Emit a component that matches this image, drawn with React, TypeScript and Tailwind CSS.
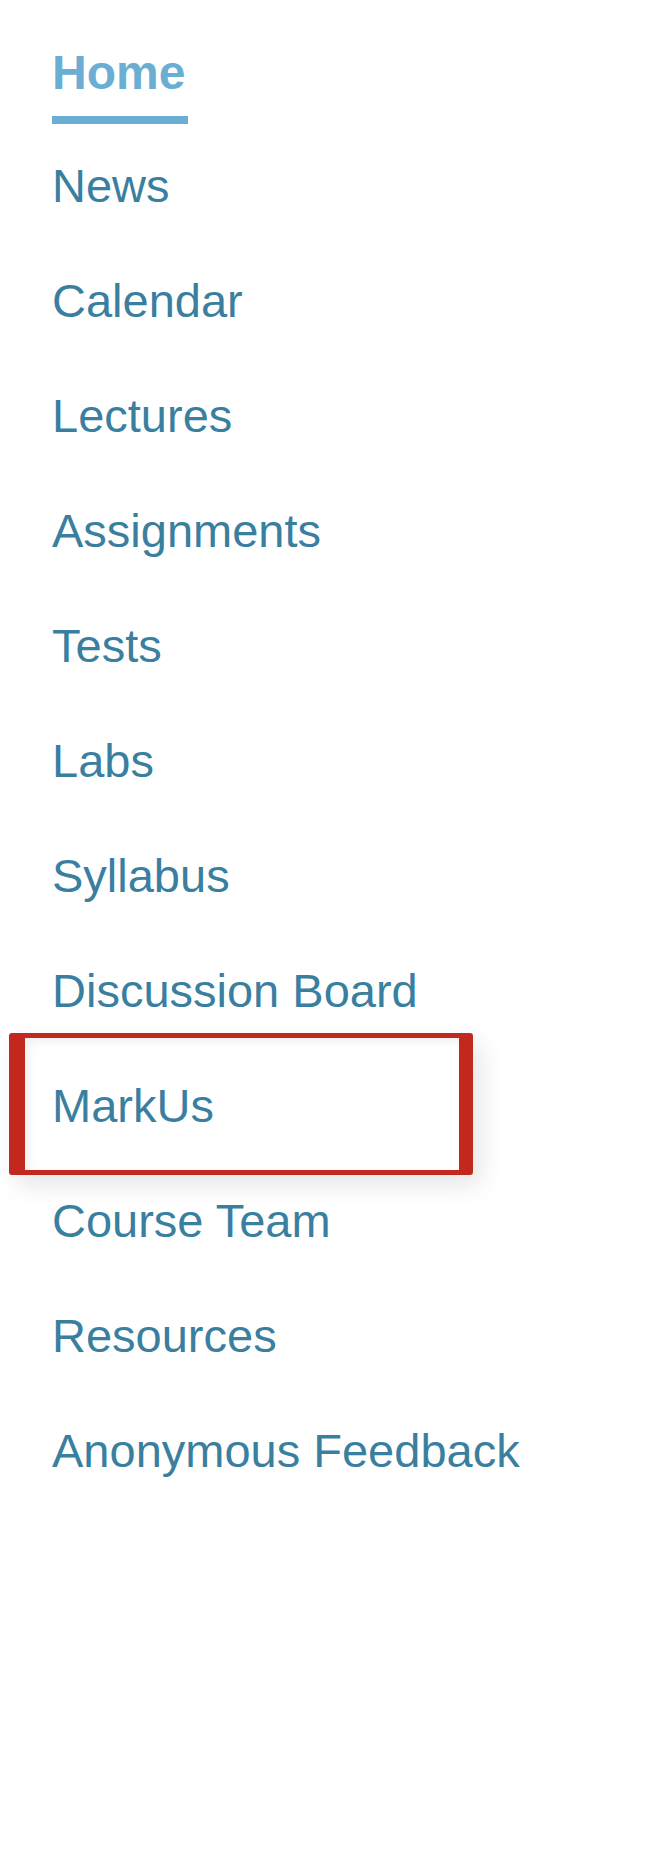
const links = [
  "News",
  "Calendar",
  "Lectures",
  "Assignments",
  "Tests",
  "Labs",
  "Syllabus",
  "Discussion Board",
  "MarkUs",
  "Course Team",
  "Resources",
  "Anonymous Feedback"
];

export default function App() {
  return (
    <div className="min-h-[1851px] w-[671px] bg-white font-['Liberation_Sans',Arial,sans-serif]">
      <nav className="pt-4">
        <ul className="flex flex-col">
          <li className="h-[115px] pl-[52px]">
            <a
              className="mt-[13px] inline-block w-[136px] border-b-8 border-[#6aaed4] text-[48px] font-bold leading-[87px] text-[#6aaed4]"
              href="#"
            >
              Home
            </a>
          </li>
          {links.map((label) => (
            <li className="relative h-[115px] pl-[52px]" key={label}>
              {label === "MarkUs" ? (
                <div className="absolute left-[9px] top-[-18px] h-[142px] w-[464px] rounded-[3px] border-y-[5px] border-l-[16px] border-r-[14px] border-[#c2281e] shadow-[8px_10px_24px_rgba(0,0,0,0.10),inset_4px_4px_10px_rgba(0,0,0,0.06)]" />
              ) : null}
              <a
                className="relative text-[47px] leading-[110px] text-[#3a7fa0]"
                href="#"
              >
                {label}
              </a>
            </li>
          ))}
        </ul>
      </nav>
    </div>
  );
}
